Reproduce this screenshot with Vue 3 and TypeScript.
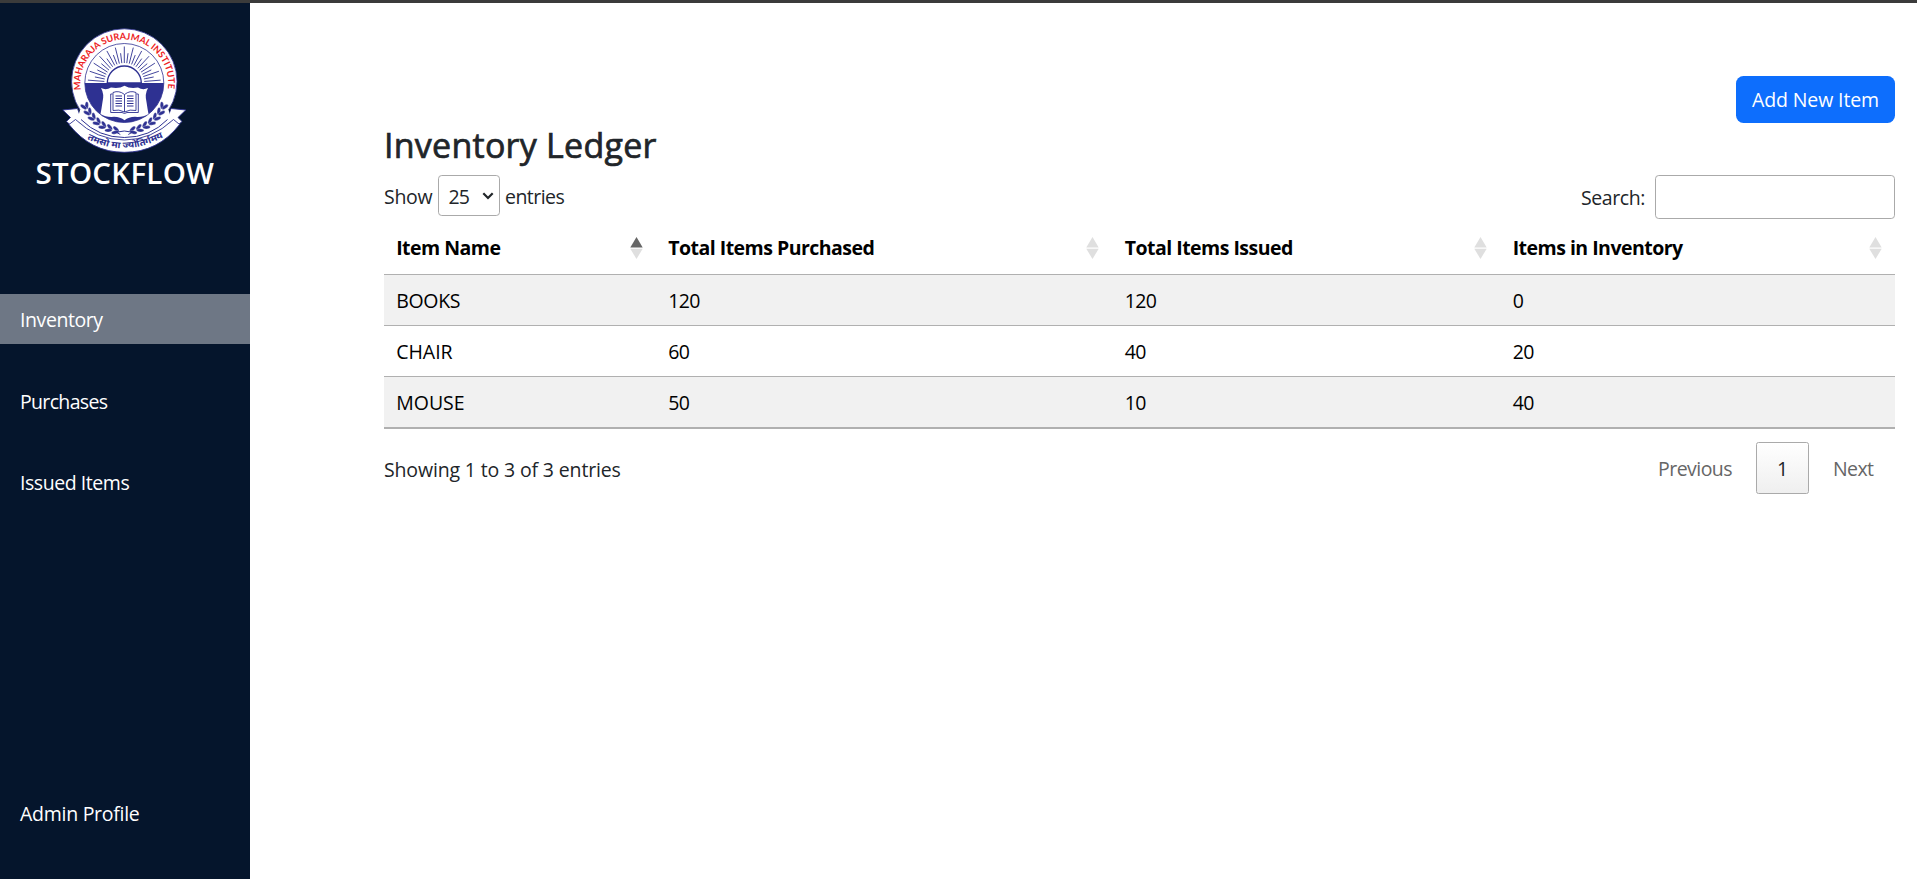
<script setup lang="ts">
import { ref } from 'vue'

interface Item {
  name: string
  purchased: number
  issued: number
  stock: number
}

const nav = [
  { label: 'Inventory', cls: 'nav-inventory', active: true },
  { label: 'Purchases', cls: 'nav-purchases', active: false },
  { label: 'Issued Items', cls: 'nav-issued', active: false },
]

const columns = [
  { label: 'Item Name', sorted: true },
  { label: 'Total Items Purchased', sorted: false },
  { label: 'Total Items Issued', sorted: false },
  { label: 'Items in Inventory', sorted: false },
]

const items: Item[] = [
  { name: 'BOOKS', purchased: 120, issued: 120, stock: 0 },
  { name: 'CHAIR', purchased: 60, issued: 40, stock: 20 },
  { name: 'MOUSE', purchased: 50, issued: 10, stock: 40 },
]

const search = ref('')

// Emblem geometry, centred on the sun
const cx = 124.3
const cy = 83

const rays = Array.from({ length: 25 }, (_, i) => {
  const a = Math.PI * (0.025 + (i * 0.95) / 24)
  const inner = 20
  const outer = i % 2 === 0 ? 36.5 : 30
  return {
    x1: cx - inner * Math.cos(a),
    y1: cy - inner * Math.sin(a),
    x2: cx - outer * Math.cos(a),
    y2: cy - outer * Math.sin(a),
  }
})

const leaves = Array.from({ length: 7 }, (_, i) => {
  const a = ((157 - i * 9) * Math.PI) / 180
  return { x: 43 * Math.cos(a), y: 88.5 + 43 * Math.sin(a), rot: 64 - i * 8 }
})
</script>

<template>
  <div class="app">
    <aside class="sidebar">
      <svg class="emblem" viewBox="62 28 125 125">
        <defs>
          <path id="name-arc" d="M80.9 90 A43.9 43.9 0 1 1 167.7 90" />
          <path id="motto-arc" d="M86 138.5 Q124.3 158.5 164 137" />
        </defs>
        <!-- ribbon tails -->
        <path class="ribbon" d="M62.8 110 L77.5 108.5 L82 121 L71 125.5 L66.5 121.5 L70.5 117.5 Z" />
        <path class="ribbon" d="M185.8 110 L171 108.5 L166.5 121 L177.5 125.5 L182 121.5 L178 117.5 Z" />
        <circle class="disc" :cx="cx" cy="81.5" r="52.7" />
        <!-- ribbon band -->
        <path class="white" d="M80 110 H168.5 L172 121 Q150 142 124.3 142 Q98 142 77 121 Z" />
        <path class="ribbon" d="M69 124.5 L75.5 119.5 Q97 140 124.3 140 Q151.5 140 173.5 119.5 L179.6 124.5 Q158 152.3 124.3 152.3 Q91 152.3 69 124.5 Z" />
        <path class="line" d="M81 119.5 Q99 137.5 124.3 137.5 Q150 137.5 167.5 119.5" />
        <!-- sun over the horizon -->
        <circle class="inner" :cx="cx" :cy="cy" r="39.5" />
        <path class="blue" d="M84.8 83 H163.8 A39.5 39.5 0 0 1 84.8 83 Z" />
        <line v-for="(r, i) in rays" :key="i" class="ray" :x1="r.x1" :y1="r.y1" :x2="r.x2" :y2="r.y2" />
        <path class="sun" d="M107.3 83 A17 17 0 0 1 141.3 83 Z" />
        <!-- shield and book -->
        <path class="white" d="M101 88 Q106 90.5 111 87.5 Q119 89 124.5 85.8 Q130 89 138 87.5 Q143 90.5 148 88 Q144.5 94 146.5 102 Q147.5 109 148.5 114 Q143 117.5 135 116.8 Q128.5 117 124.5 120.3 Q120.5 117 114 116.8 Q106 117.5 100.5 114 Q101.5 109 102.5 102 Q104.5 94 101 88 Z" />
        <path class="page" d="M124.5 94.5 Q119 90 113 92.5 V110.5 Q119 109 124.5 112 Q130 109 136 110.5 V92.5 Q130 90 124.5 94.5 Z M124.5 94.5 V112" />
        <path class="page" d="M112.5 94 H110.7 V112.5 H122 L124.5 113.5 L127 112.5 H138.3 V94 H136.5" />
        <path class="print" d="M115.5 96 H122 M115.5 98.5 H122 M115.5 101 H122 M115.5 103.5 H122 M115.5 106 H122 M127 96 H133.5 M127 98.5 H133.5 M127 101 H133.5 M127 103.5 H133.5 M127 106 H133.5" />
        <!-- laurels -->
        <g v-for="side in [1, -1]" :key="side" :transform="`translate(${cx} 0) scale(${side} 1)`">
          <g v-for="(l, i) in leaves" :key="i" :transform="`translate(${l.x} ${l.y}) rotate(${l.rot})`">
            <ellipse class="leaf" cx="0" cy="-2" rx="3.7" ry="1.7" transform="rotate(28)" />
            <ellipse class="leaf" cx="0" cy="2" rx="3.7" ry="1.7" transform="rotate(-28)" />
          </g>
          <path class="line" d="M-8 132.2 L-4 134.5 M-8 132.2 L0 131" />
        </g>
        <text class="name"><textPath href="#name-arc" textLength="149.5">MAHARAJA SURAJMAL INSTITUTE</textPath></text>
        <text class="motto"><textPath href="#motto-arc" startOffset="1" textLength="80" lengthAdjust="spacingAndGlyphs">तमसो मा ज्योतिर्गमय</textPath></text>
      </svg>
      <h2 class="brand">STOCKFLOW</h2>
      <nav class="nav">
        <a v-for="n in nav" :key="n.label" class="nav-item" :class="[n.cls, { active: n.active }]">{{ n.label }}</a>
      </nav>
      <a class="nav-item admin">Admin Profile</a>
    </aside>

    <main class="main">
      <button class="add">Add New Item</button>
      <h1 class="heading">Inventory Ledger</h1>

      <div class="controls">
        <div class="length">
          <span class="show">Show</span>
          <div class="select">
            <span class="count">25</span>
            <svg class="chevron" viewBox="0 0 12 8"><path d="M1.3 1.3 L6 6 L10.7 1.3" /></svg>
          </div>
          <span class="entries">entries</span>
        </div>
        <label class="search"><span class="search-label">Search:</span><input v-model="search" type="text" /></label>
      </div>

      <table class="table">
        <colgroup>
          <col class="c1" /><col class="c2" /><col class="c3" /><col class="c4" />
        </colgroup>
        <thead>
          <tr>
            <th v-for="c in columns" :key="c.label">
              <div class="th">
                <span class="th-label">{{ c.label }}</span>
                <svg class="sort" :class="{ sorted: c.sorted }" viewBox="0 0 13 22">
                  <path class="up" d="M6.5 0 L12.7 10.5 H0.3 Z" />
                  <path d="M0.3 11.8 H12.7 L6.5 22 Z" />
                </svg>
              </div>
            </th>
          </tr>
        </thead>
        <tbody>
          <tr v-for="it in items" :key="it.name">
            <td :class="{ tight: it.name === 'BOOKS' }"><div class="cell">{{ it.name }}</div></td>
            <td class="num"><div class="cell">{{ it.purchased }}</div></td>
            <td class="num"><div class="cell">{{ it.issued }}</div></td>
            <td class="num"><div class="cell">{{ it.stock }}</div></td>
          </tr>
        </tbody>
      </table>

      <div class="footer">
        <div class="info">Showing 1 to 3 of 3 entries</div>
        <div class="pages">
          <span class="page-btn prev">Previous</span>
          <span class="page-btn current">1</span>
          <span class="page-btn next">Next</span>
        </div>
      </div>
    </main>
  </div>
</template>

<style>
body {
  margin: 0;
  background: #fff;
}
</style>

<style scoped>
.app {
  box-sizing: border-box;
  display: flex;
  height: 879px;
  border-top: 3px solid #3b3b3b;
  overflow: hidden;
  font-family: "Open Sans", "Noto Sans", sans-serif;
  font-size: 19.5px;
  color: #212529;
}
.sidebar {
  box-sizing: border-box;
  display: flex;
  flex-direction: column;
  width: 250px;
  padding: 25px 0 41px;
  background: #05152c;
  color: #fff;
}
.emblem {
  display: block;
  flex: none;
  width: 125px;
  height: 125px;
  margin-left: 62px;
}
.disc,
.inner {
  fill: #fff;
  stroke: #2e3192;
  stroke-width: 0.8;
}
.ribbon {
  fill: #fff;
  stroke: #2e3192;
  stroke-width: 0.9;
}
.line {
  fill: none;
  stroke: #2e3192;
  stroke-width: 1;
}
.blue {
  fill: #2e3192;
}
.white {
  fill: #fff;
}
.leaf {
  fill: #2e3192;
  stroke: #fff;
  stroke-width: 0.3;
}
.ray {
  stroke: #2e3192;
  stroke-width: 0.9;
}
.sun {
  fill: #fff;
  stroke: #2e3192;
  stroke-width: 1.4;
}
.page {
  fill: none;
  stroke: #2e3192;
  stroke-width: 0.9;
}
.print {
  fill: none;
  stroke: #2e3192;
  stroke-width: 1.2;
}
.name {
  font-family: Lato, sans-serif;
  font-size: 9.2px;
  font-weight: 700;
  fill: #ed1c24;
}
.motto {
  font-size: 9px;
  font-weight: 700;
  fill: #2e3192;
}
.brand {
  margin: 2px 0 0 35.5px;
  font-size: 29.5px;
  font-weight: 600;
  line-height: 36px;
  letter-spacing: 0.25px;
}
.nav {
  display: flex;
  flex-direction: column;
  gap: 31.5px;
  margin-top: 103px;
}
.nav-item {
  height: 50px;
  padding-left: 20px;
  line-height: 52px;
  white-space: nowrap;
}
.nav-inventory {
  letter-spacing: -0.42px;
}
.nav-purchases {
  letter-spacing: -0.66px;
}
.nav-issued {
  letter-spacing: -0.45px;
}
.active {
  background: #6e7785;
}
.admin {
  margin-top: auto;
  letter-spacing: -0.27px;
}
.main {
  display: flex;
  flex: 1;
  flex-direction: column;
  padding: 73px 22px 0 134px;
}
.add {
  align-self: flex-end;
  box-sizing: border-box;
  width: 159px;
  height: 47px;
  padding: 0;
  border: 0;
  border-radius: 7.5px;
  background: #0d6efd;
  color: #fff;
  font: inherit;
  letter-spacing: -0.13px;
}
.heading {
  height: 41px;
  margin: 1px 0 0;
  font-size: 34px;
  font-weight: 500;
  line-height: 43px;
  letter-spacing: 0.25px;
  -webkit-text-stroke: 0.7px #212529;
}
.controls {
  display: flex;
  justify-content: space-between;
  height: 44px;
  margin-top: 10px;
}
.length {
  display: flex;
  line-height: 44px;
}
.show {
  width: 54px;
  letter-spacing: -0.29px;
}
.select {
  display: flex;
  box-sizing: border-box;
  align-items: center;
  width: 62px;
  height: 41px;
  border: 1px solid #aaa;
  border-radius: 3.75px;
}
.count {
  width: 22px;
  margin-left: 9.5px;
  padding-top: 2px;
  line-height: 39px;
  letter-spacing: -0.8px;
}
.chevron {
  width: 12px;
  height: 8px;
  margin-left: 11.5px;
  fill: none;
  stroke: #212529;
  stroke-width: 2.2;
}
.entries {
  margin-left: 5px;
  letter-spacing: -0.53px;
}
.search {
  display: flex;
  line-height: 46px;
}
.search-label {
  margin-right: 10px;
  letter-spacing: -0.42px;
}
.search input {
  box-sizing: border-box;
  width: 240px;
  height: 44px;
  border: 1px solid #aaa;
  border-radius: 3.75px;
  background: transparent;
  font: inherit;
}
.table {
  width: 1511px;
  table-layout: fixed;
  border-collapse: separate;
  border-spacing: 0;
  border-bottom: 1px solid #b0b0b0;
  color: #000;
}
.c1 {
  width: 272px;
}
.c2 {
  width: 456.5px;
}
.c3 {
  width: 388px;
}
.c4 {
  width: 394.5px;
}
th,
td {
  padding: 0 0 0 12.2px;
  border-bottom: 1px solid #b0b0b0;
  text-align: left;
}
th {
  font-weight: 700;
}
.th {
  display: flex;
  align-items: center;
  justify-content: space-between;
  height: 55px;
  padding-right: 13.5px;
  letter-spacing: -0.52px;
}
.th-label {
  padding-top: 2px;
  line-height: 53px;
}
.sort {
  width: 13px;
  height: 22px;
  margin-top: 2px;
  fill: #dfdfdf;
}
.sorted .up {
  fill: #666;
}
.cell {
  height: 50px;
  line-height: 52px;
}
tbody tr:nth-child(odd) td {
  background: #f1f1f1;
}
.tight {
  letter-spacing: -0.3px;
}
.num {
  letter-spacing: -0.65px;
}
.footer {
  display: flex;
  justify-content: space-between;
}
.info {
  margin-top: 15px;
  line-height: 52px;
  letter-spacing: -0.15px;
}
.pages {
  display: flex;
  gap: 3px;
  margin-top: 13px;
}
.page-btn {
  box-sizing: border-box;
  height: 52px;
  line-height: 54px;
  color: #666;
}
.prev {
  width: 116px;
  padding-left: 21px;
  letter-spacing: -0.53px;
}
.current {
  width: 53px;
  border: 1px solid #aaa;
  border-radius: 2.5px;
  background: linear-gradient(#fff, #efefef);
  color: #212529;
  line-height: 52px;
  text-align: center;
}
.next {
  width: 83px;
  padding-left: 21px;
  letter-spacing: -0.58px;
}
</style>
